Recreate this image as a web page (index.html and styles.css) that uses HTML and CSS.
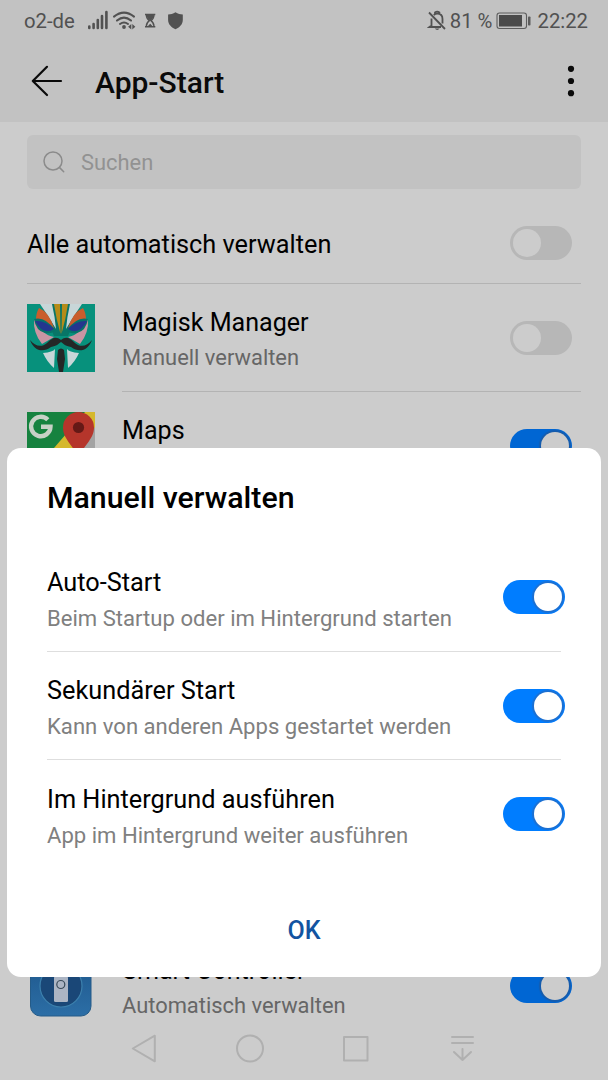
FILE: index.html
```html
<!DOCTYPE html>
<html lang="de">
<head>
<meta charset="utf-8">
<title>App-Start</title>
<link rel="stylesheet" href="styles.css">
</head>
<body>
<div class="screen">
  <header class="top">
    <div class="status">
      <span class="carrier">o2-de</span>
      <svg class="status-icons" width="102" height="24" viewBox="84 8 102 24" fill="none" stroke="#515151">
        <path d="M89.3 26.5V28M93.6 24V28M97.8 20V28M102 16V28M106.4 12V28" stroke-width="2.6" stroke-linecap="round"/>
        <path d="M114 16.6Q124 8.6 134 16.6M117 20.6Q124 14.6 131 20.6M120 24Q124 21 128 24" stroke-width="2" stroke-linecap="round"/>
        <circle cx="124" cy="27" r="1.9" fill="#515151" stroke="none"/>
        <path d="M131.3 24v5.4l-3.2-2.700zM132.300 24v5.400l3-2.700z" fill="#515151" stroke="none"/>
        <path d="M145 14.500H155.300M145 26.700H155.300" stroke-width="1.500"/>
        <path d="M146.300 15c0 3 1.500 4.500 3.100 5.600-1.600 1.100-3.100 2.700-3.100 5.600M154 15c0 3-1.500 4.500-3.100 5.600 1.600 1.100 3.100 2.700 3.100 5.600" stroke-width="1.300"/>
        <path d="M146.500 15h7.400c0 2.600-1.800 4.500-3.700 5.400-1.900-.9-3.700-2.800-3.700-5.400zM147.500 26.500l2.700-2.800 2.700 2.800z" fill="#515151" stroke="none"/>
        <path d="M175.500 12.200c2.500 1.500 4.800 2.200 7.300 2.300v5.500c0 4.500-3.300 7.400-7.300 9.200-4-1.800-7.400-4.700-7.400-9.200v-5.500c2.600-.1 4.900-.8 7.400-2.300z" fill="#515151" stroke="none"/>
      </svg>
      <span class="grow"></span>
      <svg class="bell" width="20" height="22" viewBox="427 10 20 22" fill="none" stroke="#515151" stroke-width="1.800">
        <path d="M429 12.500L445 29M431.500 18.500V25.500L429.500 27H441M433.800 15C434.800 14 436 13.600 437.300 13.600C440.700 13.600 442.500 16 442.500 19V23.500M435 13.700V12.500Q437.200 10.700 439.400 12.500V13.700"/>
        <path d="M434.700 28.600h5q-2.500 2.600-5 0z" fill="#515151" stroke="none"/>
      </svg>
      <span class="percent">81 %</span>
      <svg class="battery" width="36" height="18" viewBox="497 12 36 18">
        <rect x="498" y="13" width="29.500" height="15.500" rx="2.500" fill="none" stroke="#5d5d5d" stroke-width="1.100"/>
        <rect x="500" y="15" width="23" height="11.500" fill="#4b4b4b"/>
        <rect x="529" y="16.500" width="2.500" height="9" rx=".8" fill="#5d5d5d"/>
      </svg>
      <span class="clock">22:22</span>
    </div>
    <div class="appbar">
      <svg width="34" height="34" viewBox="30 64 34 34" fill="none" stroke="#0a0a0a" stroke-width="2.200" stroke-linecap="round" stroke-linejoin="round"><path d="M61 81H32.800M47 66.800L32.800 81L47 95"/></svg>
      <h1 class="heading">App-Start</h1>
      <svg class="more" width="8" height="34" viewBox="0 0 8 34" fill="#0a0a0a"><circle cx="4" cy="4.800" r="3.100"/><circle cx="4" cy="17" r="3.100"/><circle cx="4" cy="29.200" r="3.100"/></svg>
    </div>
  </header>

  <main class="content">
    <div class="search">
      <svg width="24" height="24" viewBox="42 150 24 24" fill="none" stroke="#8b8b8b" stroke-width="1.500" stroke-linecap="round"><circle cx="53" cy="161" r="9"/><path d="M59.400 167.400L63.700 171.700"/></svg>
      <span class="placeholder">Suchen</span>
    </div>
    <div class="all"><span class="label">Alle automatisch verwalten</span><span class="switch"></span></div>
    <div class="row">
      <svg class="app" width="68" height="68" viewBox="0 0 68 68">
        <rect width="68" height="68" fill="#07917c"/>
        <path d="M14 0H54L41 32H27z" fill="#087567"/>
        <path d="M13 0H25Q28 13 29 25Q22 13 13 0zM55 0H43Q40 13 39 25Q46 13 55 0z" fill="#c8d6d8"/>
        <path d="M27 0H33L33.500 30Q29 14 27 0zM41 0H35L34.500 30Q39 14 41 0z" fill="#b68b18"/>
        <path d="M12 4Q22 8 27 24Q18 16 9 16Q9 9 12 4zM56 4Q46 8 41 24Q50 16 59 16Q59 9 56 4z" fill="#c95d2c"/>
        <path d="M7 15Q6 29 15 40L27 33Q15 31 7 15zM61 15Q62 29 53 40L41 33Q53 31 61 15z" fill="#c995a3"/>
        <path d="M7 15Q18 12 28 26Q26 30 18 29Q9 27 7 15zM61 15Q50 12 40 26Q42 30 50 29Q59 27 61 15z" fill="#077269"/>
        <path d="M8 17Q18 16 27 25Q16 32 8 17zM60 17Q50 16 41 25Q52 32 60 17z" fill="#24368e"/>
        <path d="M16 49Q26 48 28 45L27 64Q20 58 16 49zM52 49Q42 48 40 45L41 64Q48 58 52 49z" fill="#c8d6d8"/>
        <path d="M34 36C29 32 25 34 20 39C14 44 8 42 3 36C7 47 16 49 24 43C30 42 31 40 34 38C37 40 38 42 44 43C52 49 61 47 65 36C60 42 54 44 48 39C43 34 39 32 34 36zM31 46Q34 43 37 46L38 55L36 68H32L30 55z" fill="#242727"/>
      </svg>
      <div class="entry"><div class="texts"><span class="label">Magisk Manager</span><span class="hint">Manuell verwalten</span></div><span class="switch"></span></div>
    </div>
    <div class="row">
      <svg class="app" width="68" height="68" viewBox="0 0 68 68">
        <rect width="68" height="68" fill="#16823f"/><path d="M27 36L58 0H68V18L32 52z" fill="#d5b82d"/><path d="M68 15V68H40L52 37z" fill="#a3a3a3"/>
        <path d="M20.800 7.800A9.700 9.700 0 1 0 23.500 14.800H14" fill="none" stroke="#c7d1c6" stroke-width="4.400"/>
        <path d="M36 15.500a15.500 15.500 0 0 1 31 0C67 28 55 34 51.500 48C48 34 36 28 36 15.500z" fill="#b5352b"/><circle cx="51.500" cy="15.500" r="5.600" fill="#651916"/>
      </svg>
      <div class="entry"><div class="texts"><span class="label">Maps</span><span class="hint">Manuell verwalten</span></div><span class="switch on"></span></div>
    </div>
    <div class="row last">
      <svg class="app" width="68" height="68" viewBox="0 0 68 68">
        <defs><linearGradient id="tile" x2="0" y2="1"><stop stop-color="#1d568a"/><stop offset="1" stop-color="#2c6ea6"/></linearGradient></defs>
        <rect x="3.500" y="3.500" width="60.500" height="60.500" rx="10" fill="url(#tile)" stroke="#245b88"/>
        <circle cx="34" cy="34" r="21" fill="#1a4777" stroke="#3c80ad" stroke-width="1.200"/>
        <rect x="27" y="24" width="14" height="26" rx="1.500" fill="#acb5c4"/><circle cx="33.800" cy="32.500" r="4" fill="none" stroke="#394a59" stroke-width="1.200"/>
      </svg>
      <div class="entry"><div class="texts"><span class="label">Smart Controller</span><span class="hint">Automatisch verwalten</span></div><span class="switch on"></span></div>
    </div>
  </main>

  <nav class="nav">
    <svg width="608" height="40" viewBox="0 1028 608 40" fill="none" stroke="#b0b0b0" stroke-width="2" stroke-linejoin="round" stroke-linecap="round">
      <path d="M154.800 1035.700V1061.300L132.800 1048.500z"/><circle cx="250" cy="1048.500" r="13"/><rect x="344" y="1037" width="23.500" height="23.500"/>
      <path d="M452 1037H473M452 1043H473M462.500 1049V1060M454 1052L462.500 1060L471 1052"/>
    </svg>
  </nav>

  <section class="dialog">
    <h2 class="dialog-title">Manuell verwalten</h2>
    <div class="option"><div class="texts"><span class="label">Auto-Start</span><span class="hint">Beim Startup oder im Hintergrund starten</span></div><span class="switch on"></span></div>
    <div class="option"><div class="texts"><span class="label">Sekundärer Start</span><span class="hint">Kann von anderen Apps gestartet werden</span></div><span class="switch on"></span></div>
    <div class="option"><div class="texts"><span class="label">Im Hintergrund ausführen</span><span class="hint">App im Hintergrund weiter ausführen</span></div><span class="switch on"></span></div>
    <button class="ok">OK</button>
  </section>
</div>
</body>
</html>
```
FILE: styles.css
```css
* { box-sizing: border-box; }
body { margin: 0; font-family: Roboto, "Liberation Sans", sans-serif; color: #000; }
.screen { position: relative; width: 608px; height: 1080px; overflow: hidden; background: #ccc; }
.top { height: 122px; background: #c2c2c2; color: #515151; }
.status { height: 42px; display: flex; align-items: center; padding: 0 20px 0 24px; font-size: 20.3px; }
.status-icons { margin: -2px 0 0 9px; }
.grow { flex: 1; }
.percent { margin-left: 3px; }
.battery { margin: 0 5px 0 4px; }
.appbar { height: 78px; display: flex; align-items: center; padding: 0 33px 0 30px; }
.heading { flex: 1; margin: 4px 0 0 31px; color: #0a0a0a; font-size: 30px; font-weight: 500; line-height: 40px; }
.content { padding: 13px 27px 0; }
.search { height: 54px; border-radius: 6px; background: #c2c2c2; display: flex; align-items: center; padding-left: 15px; }
.placeholder { margin: 1px 0 0 15px; font-size: 21.9px; color: #929292; }
.all { height: 95px; border-bottom: 1px solid #b3b3b3; display: flex; align-items: center; justify-content: space-between; padding: 18px 9px 0 0; }
.all .switch { margin-top: -4px; }
.row { height: 108px; display: flex; align-items: center; gap: 27px; }
.row.last { margin-top: 432px; }
.app { flex: none; }
.entry { flex: 1; height: 108px; border-bottom: 1px solid #b3b3b3; display: flex; align-items: center; justify-content: space-between; padding-right: 9px; }
.last .entry { border-color: transparent; }
.texts { display: flex; flex-direction: column; padding-top: 5px; }
.label { font-size: 25.3px; line-height: 36px; white-space: nowrap; }
.row .label { font-size: 25.1px; }
.hint { font-size: 21.9px; line-height: 34px; color: #666; white-space: nowrap; }
.switch { flex: none; width: 62px; height: 34px; border-radius: 17px; background: #b7b7b7; padding: 3px; display: flex; }
.switch::before { content: ""; width: 28px; height: 28px; border-radius: 50%; background: #ccc; }
.switch.on { justify-content: flex-end; background: #0066d3; }
.switch.on::before { box-shadow: 0 0 1px 2px #165cac; }
.nav { position: absolute; left: 0; top: 1028px; }
.dialog { position: absolute; left: 7px; top: 448px; width: 594px; height: 528.5px; border-radius: 14px; background: #fff; padding: 30px 40px 0; display: flex; flex-direction: column; }
.dialog-title { margin: 0 0 25px; font-size: 30.3px; font-weight: 500; line-height: 40px; white-space: nowrap; }
.dialog .hint { font-size: 22.1px; color: #808080; }
.option { height: 108.5px; display: flex; align-items: center; justify-content: space-between; border-bottom: 1px solid #dedede; }
.option:last-of-type { border-color: transparent; }
.option .texts { padding-top: 6px; }
.option .switch { margin: 1px -4px 0 0; }
.switch, .dialog .switch { padding-right: 3.5px; }
.dialog .switch { background: #007dff; }
.dialog .switch::before { background: #fff; box-shadow: 0 0 1px 2px #1c70d2; }
.ok { align-self: center; margin: 44px 0 0; padding: 0 8px; border: 0; background: none; color: #1254a1; font: 500 25px/36px Roboto, sans-serif; }
```
